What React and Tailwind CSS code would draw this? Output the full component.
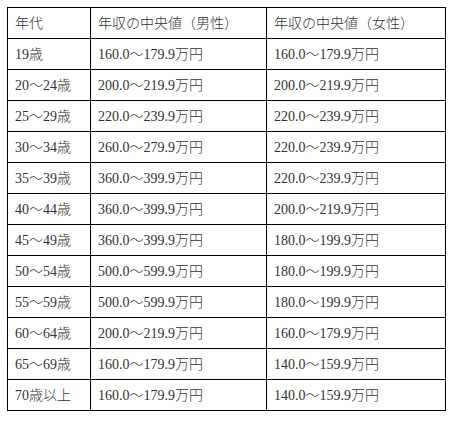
import React from "react";

const rows = [
  ["19歳", "160.0～179.9万円", "160.0～179.9万円"],
  ["20～24歳", "200.0～219.9万円", "200.0～219.9万円"],
  ["25～29歳", "220.0～239.9万円", "220.0～239.9万円"],
  ["30～34歳", "260.0～279.9万円", "220.0～239.9万円"],
  ["35～39歳", "360.0～399.9万円", "220.0～239.9万円"],
  ["40～44歳", "360.0～399.9万円", "200.0～219.9万円"],
  ["45～49歳", "360.0～399.9万円", "180.0～199.9万円"],
  ["50～54歳", "500.0～599.9万円", "180.0～199.9万円"],
  ["55～59歳", "500.0～599.9万円", "180.0～199.9万円"],
  ["60～64歳", "200.0～219.9万円", "160.0～179.9万円"],
  ["65～69歳", "160.0～179.9万円", "140.0～159.9万円"],
  ["70歳以上", "160.0～179.9万円", "140.0～159.9万円"],
];

const cell = "border border-black h-[31px] p-0 px-[7px] align-middle text-left font-light";

export default function App() {
  return (
    <div className="bg-white w-[461px] h-[423px] pt-[7px] pl-[7px] font-['Liberation_Serif','Noto_Sans_CJK_JP',serif] text-[14px] text-[#333]">
      <table className="border-collapse table-fixed w-[438px]">
        <colgroup>
          <col className="w-[83px]" />
          <col className="w-[176px]" />
          <col className="w-[179px]" />
        </colgroup>
        <thead>
          <tr>
            <th className={cell}>年代</th>
            <th className={cell}>年収の中央値（男性）</th>
            <th className={cell}>年収の中央値（女性）</th>
          </tr>
        </thead>
        <tbody>
          {rows.map((r, i) => (
            <tr key={i}>
              {r.map((c, j) => (
                <td key={j} className={cell}>{c}</td>
              ))}
            </tr>
          ))}
        </tbody>
      </table>
    </div>
  );
}
